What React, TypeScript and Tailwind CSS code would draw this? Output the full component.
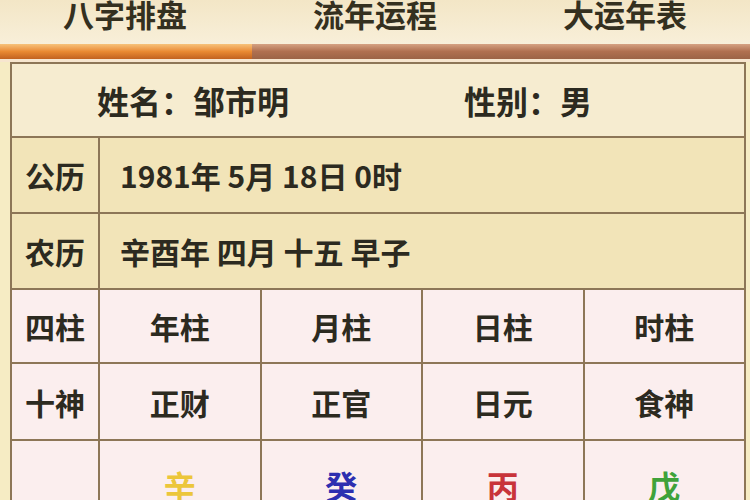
const font = { fontFamily: '"Noto Sans CJK SC", "Noto Sans", sans-serif' };

const pillars = ["年柱", "月柱", "日柱", "时柱"];
const gods = ["正财", "正官", "日元", "食神"];
const stems = [
  { ch: "辛", color: "text-[#ecc63a]" },
  { ch: "癸", color: "text-[#2d2fb0]" },
  { ch: "丙", color: "text-[#c8343a]" },
  { ch: "戊", color: "text-[#3fa23a]" },
];

function Cell({ children, className = "" }: { children: React.ReactNode; className?: string }) {
  return (
    <div className={`flex items-center justify-center border-l-2 border-[#8d7657] ${className}`}>
      {children}
    </div>
  );
}

export default function App() {
  return (
    <div className="h-[500px] w-[750px] overflow-hidden bg-[#f6ecc4] font-semibold text-[#2c2a20]" style={font}>
      {/* tabs */}
      <div className="flex h-[44px] items-end bg-gradient-to-b from-[#f3e6c6] to-[#f8efd9] text-[31px] leading-none">
        {["八字排盘", "流年运程", "大运年表"].map((t) => (
          <div key={t} className="flex flex-1 justify-center pb-[15px] text-[#34301f]">
            {t}
          </div>
        ))}
      </div>
      <div className="flex h-[15px]">
        <div className="w-[252px] bg-gradient-to-b from-[#f6c27a] via-[#e98a32] to-[#c2621f]" />
        <div className="flex-1 bg-gradient-to-b from-[#d5a283] via-[#b07050] to-[#9c6446]" />
      </div>
      <div className="h-[3px] bg-[#f7e6cf]" />

      {/* table */}
      <div className="mx-[10px] mr-[4px] border-l-2 border-r-2 border-t-2 border-[#8d7657] text-[30px] leading-none">
        <div className="flex h-[74px] items-center border-b-2 border-[#8d7657] bg-[#f6ecd0] text-[32px]">
          <span className="w-[366px] pl-[85px]">姓名：邹市明</span>
          <span className="pl-[86px]">性别：男</span>
        </div>
        <div className="flex h-[76px] border-b-2 border-[#8d7657] bg-[#f2e4b8]">
          <div className="flex w-[86px] items-center justify-center">公历</div>
          <div className="flex flex-1 items-center border-l-2 border-[#8d7657] pl-[20px]">1981年 5月 18日 0时</div>
        </div>
        <div className="flex h-[76px] border-b-2 border-[#8d7657] bg-[#f2e4b8]">
          <div className="flex w-[86px] items-center justify-center">农历</div>
          <div className="flex flex-1 items-center border-l-2 border-[#8d7657] pl-[20px]">辛酉年 四月 十五 早子</div>
        </div>
        <div className="flex h-[74px] border-b-2 border-[#8d7657] bg-[#fbeeee]">
          <div className="flex w-[86px] items-center justify-center">四柱</div>
          {pillars.map((p) => (
            <Cell key={p} className="flex-1">{p}</Cell>
          ))}
        </div>
        <div className="flex h-[77px] border-b-2 border-[#8d7657] bg-[#fbeeee]">
          <div className="flex w-[86px] items-center justify-center">十神</div>
          {gods.map((g) => (
            <Cell key={g} className="flex-1">{g}</Cell>
          ))}
        </div>
        <div className="flex h-[80px] bg-[#fbeeee]">
          <div className="w-[86px]" />
          {stems.map((s) => (
            <Cell key={s.ch} className={`flex-1 items-start pt-[28px] text-[32px] ${s.color}`}>
              {s.ch}
            </Cell>
          ))}
        </div>
      </div>
    </div>
  );
}
